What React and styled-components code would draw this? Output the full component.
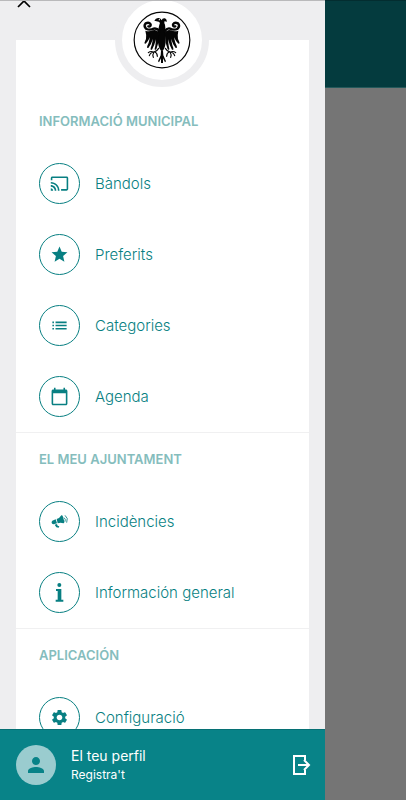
import React from "react";
import styled, { createGlobalStyle } from "styled-components";
import {
  MdCast,
  MdStar,
  MdList,
  MdCalendarToday,
  MdSettings,
  MdPerson,
} from "react-icons/md";

const teal = "#087f82";

const GlobalStyle = createGlobalStyle`
  *, *::before, *::after { box-sizing: border-box; }
  body { margin: 0; font-family: Inter, "Open Sans", sans-serif; color: ${teal}; }
  button { font: inherit; color: inherit; background: none; border: 0; padding: 0; cursor: pointer; }
`;

const Screen = styled.div`
  display: grid;
  grid-template-columns: 4fr 1fr;
  height: 100vh;
  overflow: hidden;
`;

const Drawer = styled.aside`
  display: flex;
  flex-direction: column;
  min-width: 0;
  min-height: 0;
  background: #eeeef0;
`;

const Backdrop = styled.div`
  background: #757575;
`;

const DimmedHeader = styled.div`
  height: 88px;
  background: #043b3e;
  border-top: 1px solid #032d30;
  border-bottom: 1px solid #24595b;
`;

const Scroller = styled.div`
  flex: 1;
  min-height: 0;
  overflow: hidden;
  border-top: 1px solid #b9b9bb;
`;

const TopBar = styled.div`
  display: flex;
  height: 39px;
  padding-left: 12px;
`;

const CloseButton = styled.button`
  display: flex;
  width: 24px;
  height: 24px;
  margin-top: -12px;
  color: #000;
`;

const Card = styled.nav`
  display: flow-root;
  margin: 0 16px;
  background: #fff;
`;

const Crest = styled.div`
  display: flex;
  align-items: center;
  justify-content: center;
  width: 94px;
  height: 94px;
  margin: -47px auto 8px;
  border: 7px solid #eeeef0;
  border-radius: 50%;
  background: #fff;
`;

const Section = styled.section`
  & + & {
    border-top: 1px solid #f0f0f1;
  }
`;

const SectionTitle = styled.h2`
  margin: 0;
  padding: 0 23px;
  font-size: 13px;
  font-weight: 600;
  line-height: 53px;
  color: #85bdbd;
  white-space: nowrap;
`;

const List = styled.ul`
  list-style: none;
  margin: 0;
  padding: 0;
`;

const ItemLink = styled.a`
  display: flex;
  align-items: center;
  gap: 15px;
  height: 71px;
  padding: 0 23px;
  color: ${teal};
  font-size: 15px;
  font-weight: 300;
  text-decoration: none;
  white-space: nowrap;
`;

const IconRing = styled.span`
  display: flex;
  align-items: center;
  justify-content: center;
  flex: none;
  width: 41px;
  height: 41px;
  border: 1px solid ${teal};
  border-radius: 50%;
`;

const Profile = styled.footer`
  display: flex;
  align-items: center;
  flex: none;
  gap: 15px;
  height: 71px;
  padding: 0 14px 0 16px;
  background: #088388;
  border-top: 1px solid #067074;
  color: #fff;
`;

const Avatar = styled.span`
  display: flex;
  align-items: center;
  justify-content: center;
  width: 40px;
  height: 40px;
  border-radius: 50%;
  background: #9acccf;
  color: #088388;
`;

const ProfileText = styled.div`
  flex: 1;
`;

const ProfileName = styled.div`
  font-size: 14px;
  line-height: 20px;
`;

const RegisterLink = styled.a`
  display: block;
  font-size: 12px;
  line-height: 18px;
  color: inherit;
  text-decoration: none;
`;

const ExitButton = styled.button`
  display: flex;
`;

function CloseIcon() {
  return (
    <svg width="24" height="24" viewBox="0 0 24 24" fill="none" stroke="currentColor" strokeWidth="1.7">
      <path d="M6 6l12 12M18 6L6 18" />
    </svg>
  );
}

function Megaphone() {
  return (
    <svg width="17" height="17" viewBox="0 0 51 51" fill="currentColor">
      <path d="M4 23L14 19L18 31L8 34Q4 34 2 30Q1 25 4 23Z" />
      <path d="M17 18Q26 16 31 7Q34 6 36 11L40 26Q40 31 37 31Q29 28 20 31Z" />
      <path d="M11 35L18 33L20 38L25 40L23 44L16 43Z" />
      <path d="M39 14Q45 18 42 26M42 7Q53 15 47 29" fill="none" stroke="currentColor" strokeWidth="2.5" />
    </svg>
  );
}

function InfoGlyph() {
  return (
    <svg width="9" height="19" viewBox="0 0 27 57" fill="currentColor">
      <circle cx="13" cy="6" r="6" />
      <path d="M3 18H19V50H25V56H2V50H8V24H3Z" />
    </svg>
  );
}

function ExitIcon() {
  return (
    <svg width="20" height="22" viewBox="0 0 20 22" fill="none" stroke="currentColor" strokeWidth="2">
      <path d="M14 6V2H3V20H14V16" />
      <path d="M7 11H18M13 6l5 5-5 5" />
    </svg>
  );
}

function EagleCrest() {
  return (
    <svg width="58" height="58" viewBox="2 3 174 174" fill="#050505" role="img" aria-label="Ajuntament">
      <circle cx="89" cy="90" r="83.5" fill="none" stroke="#050505" strokeWidth="3.5" />
      <path d="M66 32Q70 23 79 24Q86 25 88 31Q90 24 97 25Q104 27 103 36L97 33Q94 39 98 44L100 62V98Q97 119 89 124Q80 119 77 98V62L81 44Q85 38 79 35Z" />
      <g fill="none" stroke="#050505" strokeWidth="7" strokeLinecap="round">
        <path d="M48 49Q56 51 55 43Q50 35 40 40Q33 48 41 56Q52 62 64 56Q73 53 82 64" />
        <path d="M129 49Q121 51 122 43Q127 35 137 40Q144 48 136 56Q125 62 113 56Q106 53 97 64" />
      </g>
      <path d="M39 62Q50 66 61 61Q73 57 81 68L79 86Q78 102 72 118L68 120Q66 117 69 107L71 88Q66 108 59 119L55 119Q54 115 58 106L62 86Q56 105 48 114L44 113Q44 108 49 98L53 82Q47 95 40 101L36 100Q37 95 41 87Q43 75 39 62Z" />
      <path d="M138 62Q127 66 116 61Q104 57 97 68L99 86Q100 102 106 118L110 120Q112 117 109 107L107 88Q112 108 119 119L123 119Q124 115 120 106L116 86Q122 105 130 114L134 113Q134 108 129 98L125 82Q131 95 138 101L142 100Q141 95 137 87Q135 75 138 62Z" />
      <g fill="none" stroke="#050505" strokeLinecap="round" strokeWidth="3.5">
        <path d="M79 115Q74 125 64 126Q55 122 48 128M65 126Q54 127 51 137M65 126Q60 133 63 142M67 125Q75 129 75 139" />
        <path d="M99 115Q104 125 114 126Q123 122 130 128M113 126Q124 127 127 137M113 126Q118 133 115 142M111 125Q103 129 103 139" />
      </g>
      <path d="M86 122H92L93 136L101 154L98 157L92 145L92 159H86V145L80 157L77 154L85 136Z" />
      <circle cx="81" cy="29" r="2" fill="#fff" />
    </svg>
  );
}

const sections = [
  {
    title: "INFORMACIÓ MUNICIPAL",
    items: [
      { label: "Bàndols", icon: <MdCast size={19} /> },
      { label: "Preferits", icon: <MdStar size={19} /> },
      { label: "Categories", icon: <MdList size={19} /> },
      { label: "Agenda", icon: <MdCalendarToday size={19} /> },
    ],
  },
  {
    title: "EL MEU AJUNTAMENT",
    items: [
      { label: "Incidències", icon: <Megaphone /> },
      { label: "Información general", icon: <InfoGlyph /> },
    ],
  },
  {
    title: "APLICACIÓN",
    items: [{ label: "Configuració", icon: <MdSettings size={19} /> }],
  },
];

export default function App() {
  return (
    <>
      <GlobalStyle />
      <Screen>
        <Drawer>
          <Scroller>
            <TopBar>
              <CloseButton aria-label="Tanca"><CloseIcon /></CloseButton>
            </TopBar>
            <Card>
              <Crest><EagleCrest /></Crest>
              {sections.map((section) => (
                <Section key={section.title}>
                  <SectionTitle>{section.title}</SectionTitle>
                  <List>
                    {section.items.map((item) => (
                      <li key={item.label}>
                        <ItemLink href="#">
                          <IconRing>{item.icon}</IconRing>
                          {item.label}
                        </ItemLink>
                      </li>
                    ))}
                  </List>
                </Section>
              ))}
            </Card>
          </Scroller>
          <Profile>
            <Avatar><MdPerson size={24} /></Avatar>
            <ProfileText>
              <ProfileName>El teu perfil</ProfileName>
              <RegisterLink href="#">Registra't</RegisterLink>
            </ProfileText>
            <ExitButton aria-label="Surt"><ExitIcon /></ExitButton>
          </Profile>
        </Drawer>
        <Backdrop><DimmedHeader /></Backdrop>
      </Screen>
    </>
  );
}
